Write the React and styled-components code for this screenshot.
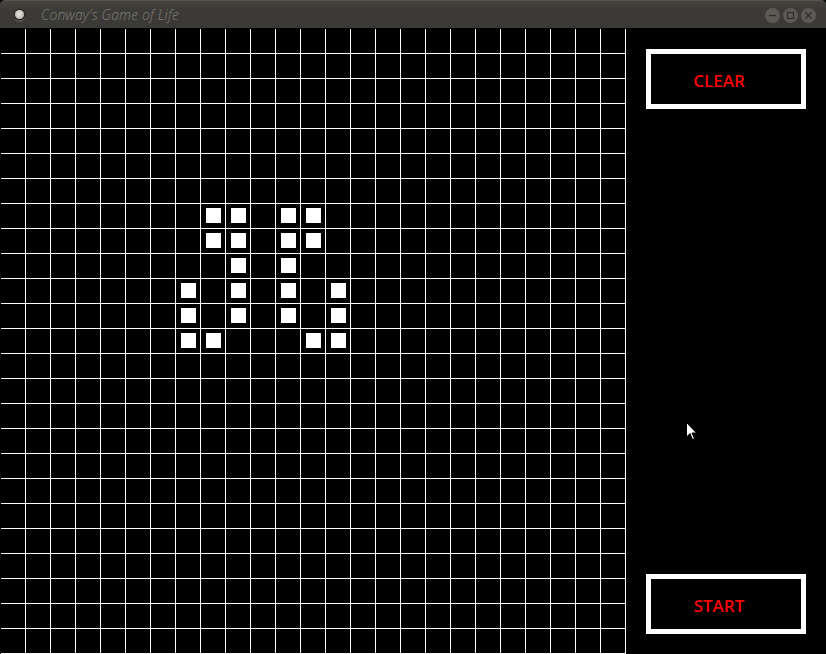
import React from "react";
import styled, { createGlobalStyle } from "styled-components";

const SIZE = 25;

// live cells as [row, col]
const LIVE = [
  [7, 8], [7, 9], [7, 11], [7, 12],
  [8, 8], [8, 9], [8, 11], [8, 12],
  [9, 9], [9, 11],
  [10, 7], [10, 9], [10, 11], [10, 13],
  [11, 7], [11, 9], [11, 11], [11, 13],
  [12, 7], [12, 8], [12, 12], [12, 13],
];

const liveSet = new Set(LIVE.map(([r, c]) => `${r}-${c}`));

const GlobalStyle = createGlobalStyle`
  html, body {
    margin: 0;
    padding: 0;
    background: #000;
    overflow: hidden;
  }
  body {
    font-family: "Open Sans", "DejaVu Sans", sans-serif;
  }
`;

const Window = styled.div`
  width: 826px;
  height: 654px;
  display: flex;
  flex-direction: column;
  background: #000;
  position: relative;
`;

const TitleBar = styled.div`
  height: 28px;
  flex: none;
  display: flex;
  align-items: center;
  background: linear-gradient(#45443f, #3c3b37 30%, #3a3935);
  border-radius: 5px 5px 0 0;
  border-top: 1px solid #55544f;
  box-sizing: border-box;
  padding: 0 0 0 13px;
`;

const AppIcon = styled.div`
  width: 9px;
  height: 9px;
  border-radius: 50%;
  background: radial-gradient(circle at 45% 40%, #e4e3de, #bcbbb6 70%);
  box-shadow: 0 0 0 1.5px #2a2926, 0 2px 0 1px #55544f;
  margin-left: 2px;
`;

const Title = styled.span`
  margin-left: 17px;
  font-family: "Open Sans", sans-serif;
  font-style: italic;
  font-weight: 300;
  font-size: 14px;
  color: #7f7e79;
  letter-spacing: 0.1px;
`;

const Controls = styled.div`
  margin-left: auto;
  margin-right: 10px;
  display: flex;
  gap: 3px;
  padding-top: 2px;
`;

const CtrlButton = styled.div`
  width: 15px;
  height: 15px;
  border-radius: 50%;
  background: #5b5a55;
  display: flex;
  align-items: center;
  justify-content: center;
`;

const Body = styled.div`
  flex: 1;
  display: flex;
  min-height: 0;
`;

const Board = styled.div`
  padding: 1px 0 0 1px;
  display: grid;
  grid-template-columns: repeat(${SIZE}, 25px);
  grid-auto-rows: 25px;
  flex: none;
  align-content: start;
`;

const Cell = styled.div`
  box-sizing: border-box;
  border-right: 1px solid #fff;
  border-bottom: 1px solid #fff;
  position: relative;
  &::after {
    content: "";
    display: ${(p) => (p.$alive ? "block" : "none")};
    position: absolute;
    left: 5px;
    top: 4px;
    width: 15px;
    height: 15px;
    background: #fff;
  }
`;

const Panel = styled.div`
  flex: 1;
  display: flex;
  flex-direction: column;
  justify-content: space-between;
  align-items: center;
  padding: 21px 0 20px;
`;

const PanelButton = styled.button`
  width: 160px;
  height: 60px;
  box-sizing: border-box;
  border: 5px solid #fff;
  background: #000;
  color: #ff0000;
  font-family: "Open Sans", sans-serif;
  font-size: 17px;
  font-weight: 600;
  padding: 3px 14px 0 0;
  margin: 0;
  display: flex;
  align-items: center;
  justify-content: center;
  cursor: default;
`;

const Pointer = styled.svg`
  position: absolute;
  left: 686px;
  top: 422px;
`;

function WinControl({ kind }) {
  return (
    <CtrlButton>
      <svg width="9" height="9" viewBox="0 0 9 9">
        {kind === "min" && (
          <line x1="1" y1="4.5" x2="8" y2="4.5" stroke="#2e2d2a" strokeWidth="1.3" />
        )}
        {kind === "max" && (
          <rect x="1.5" y="1.5" width="6" height="6" fill="none" stroke="#2e2d2a" strokeWidth="1.2" />
        )}
        {kind === "close" && (
          <path d="M1.5 1.5 L7.5 7.5 M7.5 1.5 L1.5 7.5" stroke="#2e2d2a" strokeWidth="1.4" />
        )}
      </svg>
    </CtrlButton>
  );
}

export default function App() {
  const cells = [];
  for (let r = 0; r < SIZE; r++) {
    for (let c = 0; c < SIZE; c++) {
      cells.push(<Cell key={`${r}-${c}`} $alive={liveSet.has(`${r}-${c}`)} />);
    }
  }

  return (
    <>
      <GlobalStyle />
      <Window>
        <TitleBar>
          <AppIcon />
          <Title>Conway's Game of Life</Title>
          <Controls>
            <WinControl kind="min" />
            <WinControl kind="max" />
            <WinControl kind="close" />
          </Controls>
        </TitleBar>
        <Body>
          <Board>{cells}</Board>
          <Panel>
            <PanelButton>CLEAR</PanelButton>
            <PanelButton>START</PanelButton>
          </Panel>
        </Body>
        <Pointer width="12" height="19" viewBox="0 0 12 19">
          <path
            d="M0.5 0.5 L0.5 15 L4 11.5 L6.5 17.5 L8.5 16.5 L6 11 L10.5 11 Z"
            fill="#fff"
            stroke="#000"
            strokeWidth="1"
          />
        </Pointer>
      </Window>
    </>
  );
}
